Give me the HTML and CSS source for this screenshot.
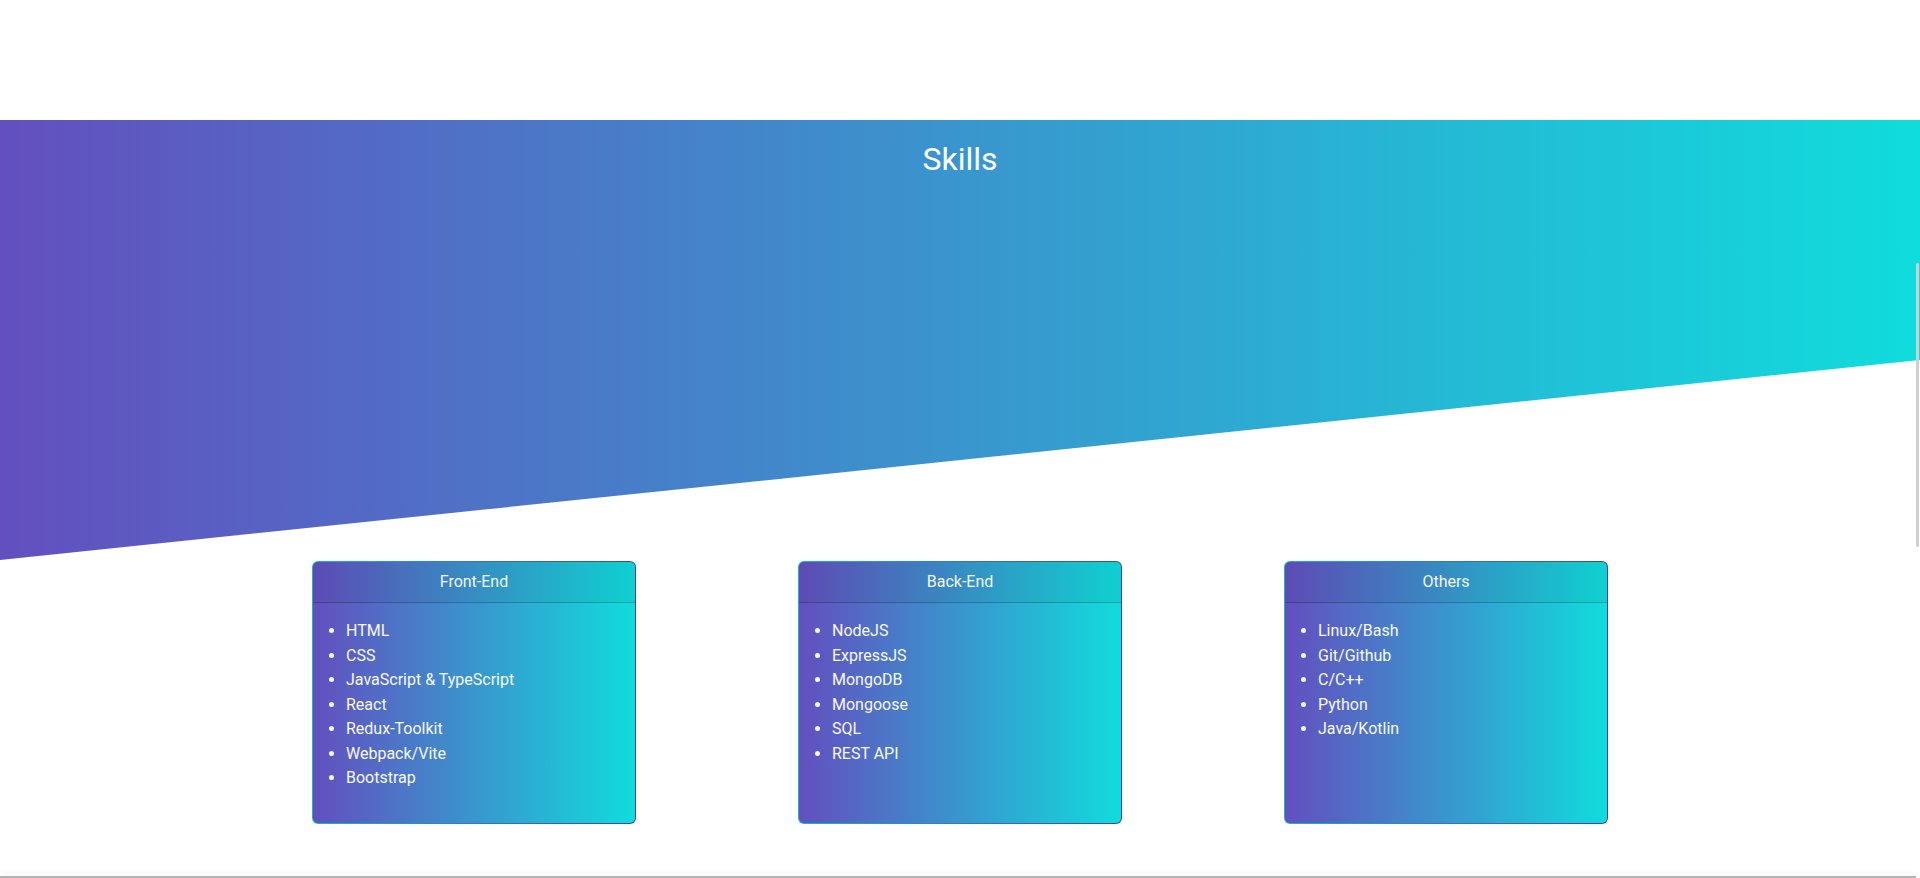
FILE: index.html
```html
<!DOCTYPE html>
<html lang="en">
<head>
<meta charset="utf-8">
<title>Skills</title>
<link rel="stylesheet" href="styles.css">
</head>
<body>
<div class="top-space"></div>
<section class="band">
  <h2 class="band-title">Skills</h2>
</section>
<section class="cards">
  <div class="card">
    <div class="card-inner">
      <div class="card-header">Front-End</div>
      <div class="card-body">
        <ul class="skill-list">
          <li>HTML</li>
          <li>CSS</li>
          <li>JavaScript &amp; TypeScript</li>
          <li>React</li>
          <li>Redux-Toolkit</li>
          <li>Webpack/Vite</li>
          <li>Bootstrap</li>
        </ul>
      </div>
    </div>
  </div>
  <div class="card">
    <div class="card-inner">
      <div class="card-header">Back-End</div>
      <div class="card-body">
        <ul class="skill-list">
          <li>NodeJS</li>
          <li>ExpressJS</li>
          <li>MongoDB</li>
          <li>Mongoose</li>
          <li>SQL</li>
          <li>REST API</li>
        </ul>
      </div>
    </div>
  </div>
  <div class="card">
    <div class="card-inner">
      <div class="card-header">Others</div>
      <div class="card-body">
        <ul class="skill-list">
          <li>Linux/Bash</li>
          <li>Git/Github</li>
          <li>C/C++</li>
          <li>Python</li>
          <li>Java/Kotlin</li>
        </ul>
      </div>
    </div>
  </div>
</section>
<div class="bottom-edge"></div>
<div class="scroll-thumb"></div>
</body>
</html>
```
FILE: styles.css
```css
html, body {
  margin: 0;
  padding: 0;
  background: #ffffff;
  overflow: hidden;
}
body {
  font-family: Roboto, "Open Sans", sans-serif;
  color: #ffffff;
  height: 878px;
}
.top-space {
  height: 120px;
}
.band {
  height: 440px;
  background: linear-gradient(to right, #634fbf 0%, #10dcdc 100%);
  clip-path: polygon(0 0, 100% 0, 100% 240px, 0 100%);
  text-align: center;
}
.band-title {
  margin: 0;
  padding-top: 20px;
  font-size: 32px;
  font-weight: 400;
  line-height: 38px;
  color: #ffffff;
}
.cards {
  display: flex;
  justify-content: space-between;
  align-items: stretch;
  width: 1296px;
  margin: 1px auto 0;
}
.card {
  width: 324px;
  box-sizing: border-box;
  padding: 1px;
  border-radius: 6px;
  background: linear-gradient(to right, #16b8c6 0%, #4a3fa6 100%);
  display: flex;
}
.card-inner {
  flex: 1;
  display: flex;
  flex-direction: column;
  border-radius: 5px;
  overflow: hidden;
  background: linear-gradient(to right, #634fbf 0%, #10dcdc 100%);
}
.card-header {
  padding: 8px 16px;
  line-height: 24px;
  font-size: 16px;
  text-align: center;
  color: #f4f6f8;
  background: rgba(0, 0, 0, 0.05);
  border-bottom: 1px solid rgba(0, 0, 0, 0.2);
}
.card-body {
  flex: 1;
  padding: 16px 0;
}
.skill-list {
  margin: 0 0 16px;
  padding-left: 33px;
  font-size: 16px;
  line-height: 24.5px;
  color: #f8f9fa;
}
.bottom-edge {
  position: fixed;
  left: 0;
  right: 4px;
  top: 876px;
  height: 2px;
  background: #b4b4b4;
  box-shadow: 0 -3px 6px rgba(0, 0, 0, 0.08);
}
.scroll-thumb {
  position: fixed;
  left: 1916px;
  top: 263px;
  width: 3px;
  height: 284px;
  background: #cfcfcf;
  border-radius: 2px;
}
```
